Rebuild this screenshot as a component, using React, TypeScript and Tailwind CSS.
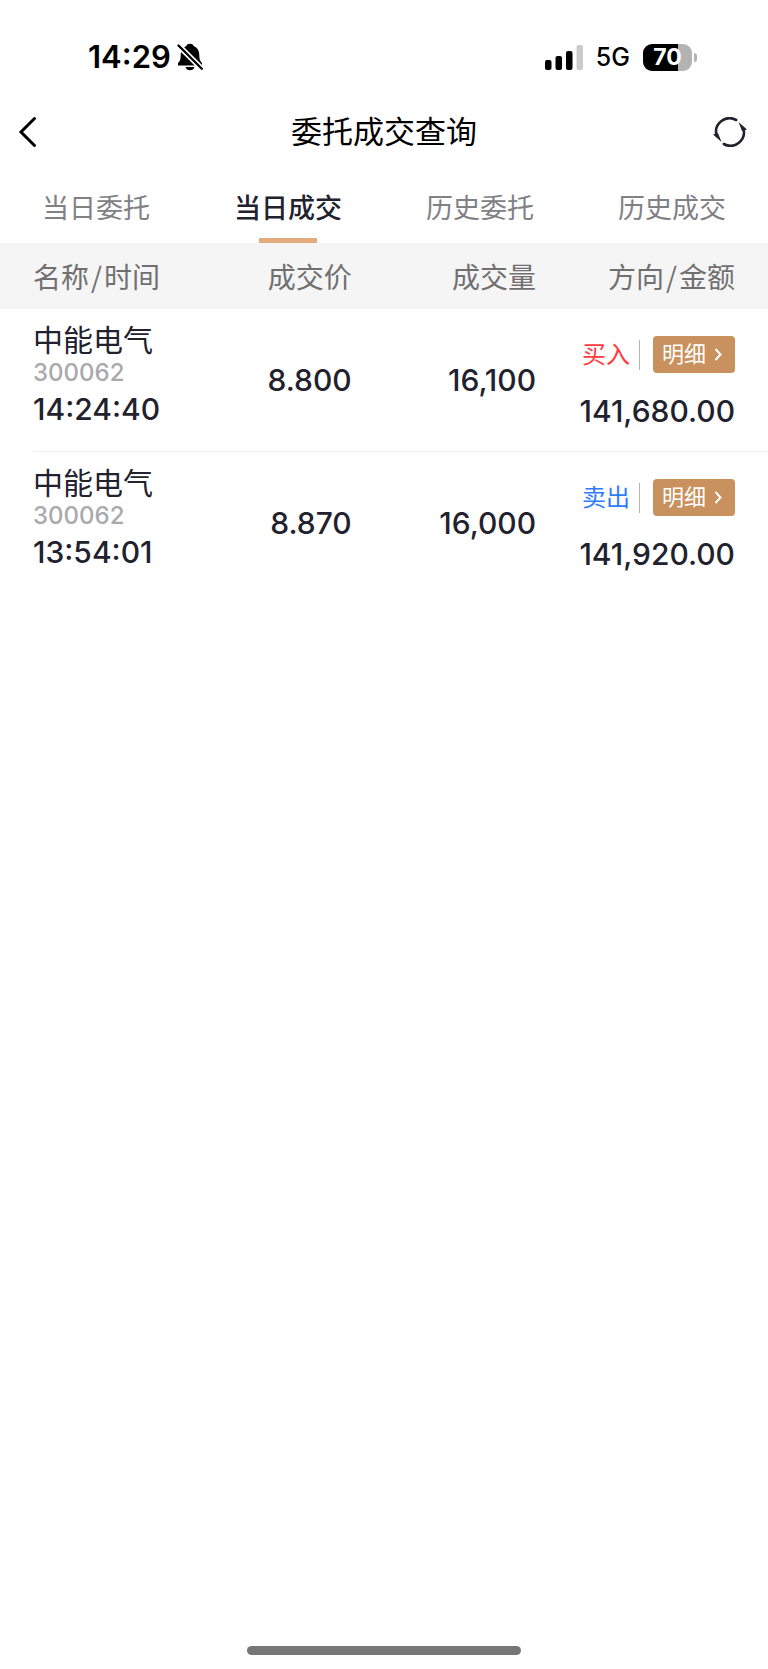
type Side = 'buy' | 'sell'

interface Deal {
  name: string
  code: string
  time: string
  price: string
  volume: string
  side: Side
  amount: string
}

const tabs = ['当日委托', '当日成交', '历史委托', '历史成交']
const activeTab = '当日成交'

const deals: Deal[] = [
  { name: '中能电气', code: '300062', time: '14:24:40', price: '8.800', volume: '16,100', side: 'buy', amount: '141,680.00' },
  { name: '中能电气', code: '300062', time: '13:54:01', price: '8.870', volume: '16,000', side: 'sell', amount: '141,920.00' },
]

function BellOffIcon() {
  return (
    <svg viewBox="0 0 26 28" className="w-[26px] h-7" aria-hidden="true">
      <path d="M13 .8c2 0 3.200.8 3.600 2.200C20.500 4.500 22.300 8 22.300 12c0 4.500.9 6.200 2.700 8v2.500H1V20c2-1.700 2.700-3.500 2.700-8 0-4 1.800-7.500 5.700-9C9.800 1.600 11 .8 13 .8z" />
      <path d="M8.500 24h9c-.5 2-2.200 3.300-4.500 3.300S9 26 8.500 24z" />
      <path d="M-1 0 27 28" stroke="#fff" strokeWidth="5.500" />
      <path d="M1.500 2.500 24.800 25.800" stroke="#000" strokeWidth="2.300" strokeLinecap="round" />
    </svg>
  )
}

function SignalIcon() {
  return (
    <svg viewBox="0 0 38 25" className="w-[38px] h-[25px]" aria-hidden="true">
      <rect x="0" y="15" width="6.500" height="10" rx="2" />
      <rect x="10.500" y="11" width="6.500" height="14" rx="2" />
      <rect x="21" y="6" width="6.500" height="19" rx="2" />
      <rect x="31.500" y="0" width="6.500" height="25" rx="2" fill="#cbcbcb" />
    </svg>
  )
}

function Battery() {
  return (
    <div className="flex items-center gap-[2px]">
      <div className="flex h-[27px] w-[49px] items-center justify-center rounded-[9px] bg-linear-to-r from-black from-72% to-[#b3b3b3] to-72% text-[23px] font-bold text-white">
        70
      </div>
      <div className="h-[9px] w-[3px] rounded-r-full bg-[#b3b3b3]" />
    </div>
  )
}

function RefreshIcon() {
  return (
    <svg viewBox="0 0 34 30" className="w-[34px] h-[30px]" fill="none" stroke="#22222e" strokeWidth="2.600" strokeLinecap="round" aria-hidden="true">
      <path d="M3.500 18A13.500 13.500 0 0 1 23.200 3" />
      <path d="M30.500 12A13.500 13.500 0 0 1 10.800 27" />
      <path d="M25.500 5 34 12.500 29 14z" fill="#22222e" stroke="none" />
      <path d="M8.500 25 0 17.500 5 16z" fill="#22222e" stroke="none" />
    </svg>
  )
}

function DealRow({ deal, last }: { deal: Deal; last: boolean }) {
  const line = last ? 'border-b border-transparent' : 'border-b border-[#eeeeee]'

  return (
    <tr className="align-top">
      <td className="pl-[33px]">
        <div className={`h-[143px] pt-[13px] ${line}`}>
          <div className="text-[30px] leading-9">{deal.name}</div>
          <div className="text-2xl leading-[30px] font-medium text-[#a9a9ae]">{deal.code}</div>
          <div className="text-[30px] leading-[42px] font-medium">{deal.time}</div>
        </div>
      </td>
      <td className={`text-right align-middle text-[30px] font-medium ${line}`}>{deal.price}</td>
      <td className={`text-right align-middle text-[30px] font-medium ${line}`}>{deal.volume}</td>
      <td className={`pr-[33px] pt-[27px] ${line}`}>
        <div className="flex items-center justify-end">
          <span className={`text-2xl leading-9 ${deal.side === 'buy' ? 'text-[#ff3b3f]' : 'text-[#2f7bff]'}`}>
            {deal.side === 'buy' ? '买入' : '卖出'}
          </span>
          <span className="ml-[9px] mr-[13px] h-[30px] w-px bg-[#b5b5b5]" />
          <button type="button" className="flex h-[37px] w-[82px] items-center justify-between rounded bg-[#c8915d] pl-[9px] pr-[13px] text-[22px] text-white">
            明细
            <svg viewBox="0 0 8 13" className="w-2 h-[13px]" fill="none" stroke="currentColor" strokeWidth="2" aria-hidden="true">
              <path d="M1.500 1l5 5.500-5 5.500" />
            </svg>
          </button>
        </div>
        <div className="mt-[18px] text-right text-[30px] leading-10 font-medium">{deal.amount}</div>
      </td>
    </tr>
  )
}

export default function App() {
  return (
    <div className="flex min-h-screen flex-col bg-white font-[Inter,'Noto_Sans_CJK_SC',sans-serif] text-[#22222e]">
      {/* Status bar */}
      <div className="flex h-24 items-center justify-between pt-[18px] pl-[88px] pr-[71px] text-black">
        <div className="flex items-center gap-[6px]">
          <span className="text-[31px] font-semibold">14:29</span>
          <BellOffIcon />
        </div>
        <div className="flex items-center gap-[13px]">
          <SignalIcon />
          <span className="pt-[2px] text-[25px] font-medium">5G</span>
          <Battery />
        </div>
      </div>

      <header className="flex h-[72px] items-center justify-between pl-[18px] pr-[21px] text-black">
        <button type="button" aria-label="返回" className="w-[37px]">
          <svg viewBox="0 0 20 32" className="w-5 h-8" fill="none" stroke="currentColor" strokeWidth="3" strokeLinecap="round" aria-hidden="true">
            <path d="M16.500 2.500 3 16l13.500 13.500" />
          </svg>
        </button>
        <h1 className="text-[31px]">委托成交查询</h1>
        <button type="button" aria-label="刷新">
          <RefreshIcon />
        </button>
      </header>

      <nav className="grid h-[75px] grid-cols-4">
        {tabs.map((tab) => (
          <button
            key={tab}
            type="button"
            className={`relative pt-[7px] text-[27px] ${tab === activeTab ? 'font-medium' : 'text-[#808085]'}`}
          >
            {tab}
            {tab === activeTab && (
              <span className="absolute bottom-0 left-1/2 h-[5px] w-[58px] -translate-x-1/2 bg-[#e2ac7c]" />
            )}
          </button>
        ))}
      </nav>

      <table className="w-full table-fixed border-separate border-spacing-0">
        <thead className="bg-[#f5f5f5] font-['Noto_Sans_CJK_SC',sans-serif] text-[28px] text-[#707070]">
          <tr className="h-[66px]">
            <th className="w-[21.8%] whitespace-nowrap pl-[33px] text-left font-normal">
              名称<span className="mx-[2px]">/</span>时间
            </th>
            <th className="w-[24%] text-right font-normal">成交价</th>
            <th className="w-[24%] text-right font-normal">成交量</th>
            <th className="pr-[33px] text-right font-normal">
              方向<span className="mx-[2px]">/</span>金额
            </th>
          </tr>
        </thead>
        <tbody>
          {deals.map((deal, i) => (
            <DealRow key={deal.time} deal={deal} last={i === deals.length - 1} />
          ))}
        </tbody>
      </table>

      {/* Home indicator */}
      <div className="mx-auto mt-auto mb-[14px] h-[9px] w-[274px] rounded-full bg-[#777777]" />
    </div>
  )
}
